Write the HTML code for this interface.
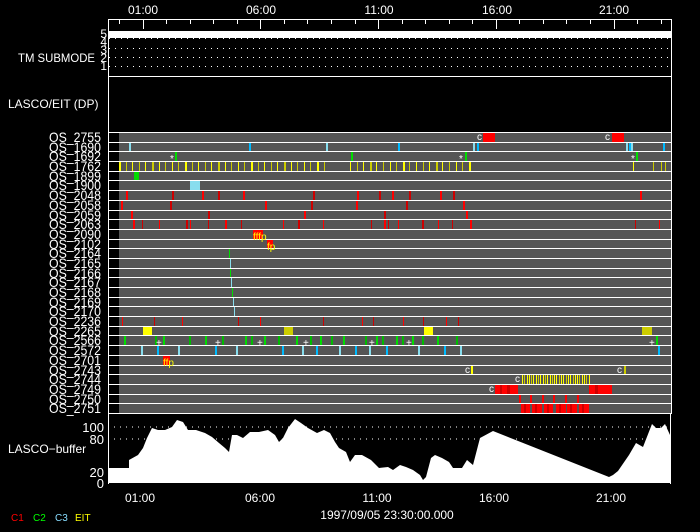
<!DOCTYPE html>
<html><head><meta charset="utf-8">
<style>
html,body{margin:0;padding:0;background:#000;}
svg{display:block;}
text{font-family:"Liberation Sans",sans-serif;fill:#fff;}
</style></head>
<body>
<svg id="s" width="700" height="532" viewBox="0 0 700 532" xmlns="http://www.w3.org/2000/svg">
<rect width="700" height="532" fill="#000"/>
<g id="g"></g>
<polygon fill="#fff" points="109,483 109,468 121,468 129,468 129,460 138,455 143,448 147,438 152,428 158,430 165,430 172,427 177,420 183,422 188,430 196,430 205,433 212,437 219,443 225,448 229,452 232,435 237,435 243,438 250,432 259,432 268,430 275,435 279,442 283,438 288,428 295,419 301,423 308,428 317,433 324,430 330,433 335,442 339,448 346,452 350,462 355,455 362,455 371,460 379,468 388,467 393,470 400,465 406,467 413,470 420,475 423,480 426,477 431,458 435,455 442,458 449,462 453,468 462,468 467,460 473,465 480,438 493,431 609,477 613,475 618,471 629,455 636,443 643,447 652,424 656,428 661,428 665,424 670,435 670,483"/>
<line x1="108" y1="427" x2="670" y2="427" stroke="#fff" stroke-dasharray="1,5"/>
<line x1="108" y1="439" x2="670" y2="439" stroke="#fff" stroke-dasharray="1,5"/>
<g font-size="13">
<text x="104" y="432" text-anchor="end">100</text>
<text x="104" y="444" text-anchor="end">80</text>
<text x="104" y="477" text-anchor="end">20</text>
<text x="104" y="488" text-anchor="end">0</text>
<text x="8" y="453" font-size="12">LASCO−buffer</text>
<text x="18" y="62" font-size="12" textLength="77" lengthAdjust="spacingAndGlyphs">TM SUBMODE</text>
<text x="8" y="108" font-size="12">LASCO/EIT (DP)</text>
</g>
<g font-size="12" text-anchor="middle">
<text x="143" y="14">01:00</text><text x="261" y="14">06:00</text><text x="379" y="14">11:00</text><text x="497" y="14">16:00</text><text x="614" y="14">21:00</text>
<text x="140" y="502">01:00</text><text x="260" y="502">06:00</text><text x="377" y="502">11:00</text><text x="494" y="502">16:00</text><text x="611" y="502">21:00</text>
<text x="387" y="519">1997/09/05 23:30:00.000</text>
</g>
<g font-size="10">
<text x="11" y="521" style="fill:#f00">C1</text>
<text x="33" y="521" style="fill:#0f0">C2</text>
<text x="55" y="521" style="fill:#8df">C3</text>
<text x="75" y="521" style="fill:#ff0">EIT</text>
</g>
</svg>
<script>
var g=document.getElementById('g'),NS="http://www.w3.org/2000/svg";
function el(t,a,txt){var e=document.createElementNS(NS,t);for(var k in a)e.setAttribute(k,a[k]);if(txt)e.textContent=txt;g.appendChild(e);return e;}
function R(x,y,w,h,c){el('rect',{x:x,y:y,width:w,height:h,fill:c});}
R(108,19,564,1,'#fff');R(108,19,1,465,'#fff');R(671,19,1,395,'#fff');R(670,413,1,71,'#fff');
for(var i=0;i<24;i++){var x=Math.round(119+i*23.55);var maj=(i%5==1);R(x,20,1,maj?9:4,'#fff');}
R(109,31,562,7,'#fff');
[38,48,57,66].forEach(function(y){el('line',{x1:109,y1:y+.5,x2:671,y2:y+.5,stroke:'#fff','stroke-dasharray':'1,5'});});
[['5',38],['4',46],['3',54],['2',62],['1',70]].forEach(function(a){el('text',{x:107,y:a[1],'font-size':12,'text-anchor':'end'},a[0]);});
R(108,76,564,1,'#fff');
var names=['2755','1690','1692','1762','1899','1900','2048','2058','2059','2063','2090','2102','2164','2165','2166','2167','2168','2169','2170','2236','2265','2566','2572','2701','2743','2744','2749','2750','2751'];
var Y=[];
for(var i=0;i<29;i++){var y=Math.round(132+i*9.69);Y.push(y);}
Y.push(413);
for(var i=0;i<29;i++){R(119,Y[i],552,Y[i+1]-Y[i],'#555');R(109,Y[i],562,1,'#fff');
 el('text',{x:49,y:Y[i]+10,'font-size':14,textLength:52,lengthAdjust:'spacingAndGlyphs'},'OS_'+names[i]);}
R(109,413,562,1,'#fff');
function row(i){return [Y[i]+1,Y[i+1]-Y[i]-1];}
function bar(i,x,w,c){var r=row(i);R(x,r[0],w,r[1],c);}
function txt(i,x,s,c,dy){el('text',{x:x,y:Y[i]+(dy||8),'font-size':10,fill:c,style:'fill:'+c},s);}
var RED='#f00',DR='#c00',GR='#0d0',LB='#8de',CY='#0bf',YE='#ff0',OL='#cc0';
bar(0,483,12,RED);bar(0,612,12,RED);txt(0,477,'c','#fff');txt(0,605,'c','#fff');
[[129,LB],[249,CY],[326,LB],[398,CY],[473,LB],[477,CY],[626,LB],[629,CY],[631,LB],[663,CY]].forEach(function(a){bar(1,a[0],2,a[1]);});
[175,351,465,636].forEach(function(x){bar(2,x,2,GR);});[170,459,631].forEach(function(x){txt(2,x,'*','#fff',11);});
var k=0;for(var x=119;x<470;x+=6.6){if(x>327&&x<349)continue;bar(3,Math.round(x),(k%5==0)?2:1,(k%2)?OL:YE);k++;}
[633,653,661,665].forEach(function(x,j){bar(3,x,1,j?OL:YE);});
bar(4,134,5,GR);bar(5,190,10,LB);
[126,172,202,218,243,313,357,379,392,409,440,453,640].forEach(function(x,j){bar(6,x,2,j%2?DR:RED);});
[121,170,265,311,356,406,463].forEach(function(x,j){bar(7,x,2,j%2?DR:RED);});
[131,208,304,384,466].forEach(function(x,j){bar(8,x,2,j%2?DR:RED);});
[133,142,159,186,190,208,225,241,283,298,323,371,384,388,398,422,438,452,470,635,659].forEach(function(x,j){bar(9,x,(j%3)?1:2,j%2?DR:RED);});
bar(10,253,10,RED);txt(10,253,'fffp',YE,11);
bar(11,267,6,RED);txt(11,267,'fp',YE,11);
[[229,GR],[230,LB],[230,GR],[231,LB],[232,GR],[233,LB],[234,LB]].forEach(function(a,j){bar(12+j,a[0],1,a[1]);});
[122,154,182,238,260,323,362,373,403,423,446,458].forEach(function(x,j){bar(19,x,1,j%2?DR:RED);});
bar(20,143,9,YE);bar(20,284,9,OL);bar(20,424,9,YE);bar(20,642,10,OL);
[124,155,163,189,205,222,245,251,264,278,296,310,320,331,343,365,376,382,396,402,412,422,437,456,656].forEach(function(x,j){bar(21,x,2,j%2?'#0b0':GR);});
[159,218,260,306,372,409,652].forEach(function(x){txt(21,x-3,'+','#fff',11);});
[[141,LB],[157,CY],[178,LB],[215,CY],[236,LB],[282,CY],[302,LB],[316,CY],[339,LB],[355,CY],[369,LB],[386,CY],[418,LB],[444,CY],[460,LB],[658,CY]].forEach(function(a){bar(22,a[0],2,a[1]);});
bar(23,163,7,RED);txt(23,163,'ffp',YE,11);
bar(24,471,2,YE);bar(24,624,2,OL);txt(24,465,'c','#fff');txt(24,617,'c','#fff');
for(var x=522;x<589;x+=2.3){bar(25,Math.round(x),1,(Math.round(x/2.3)%3)?YE:OL);}txt(25,515,'c','#fff');
bar(26,495,23,RED);bar(26,500,2,DR);bar(26,507,3,DR);bar(26,589,23,RED);bar(26,595,3,DR);txt(26,489,'c','#fff');
[519,530,542,553,565,577].forEach(function(x){bar(27,x,2,RED);});
[[521,9],[532,10],[544,9],[556,10],[567,10],[579,10]].forEach(function(a){bar(28,a[0],a[1],RED);bar(28,a[0]+3,2,DR);});
</script>
</body></html>
